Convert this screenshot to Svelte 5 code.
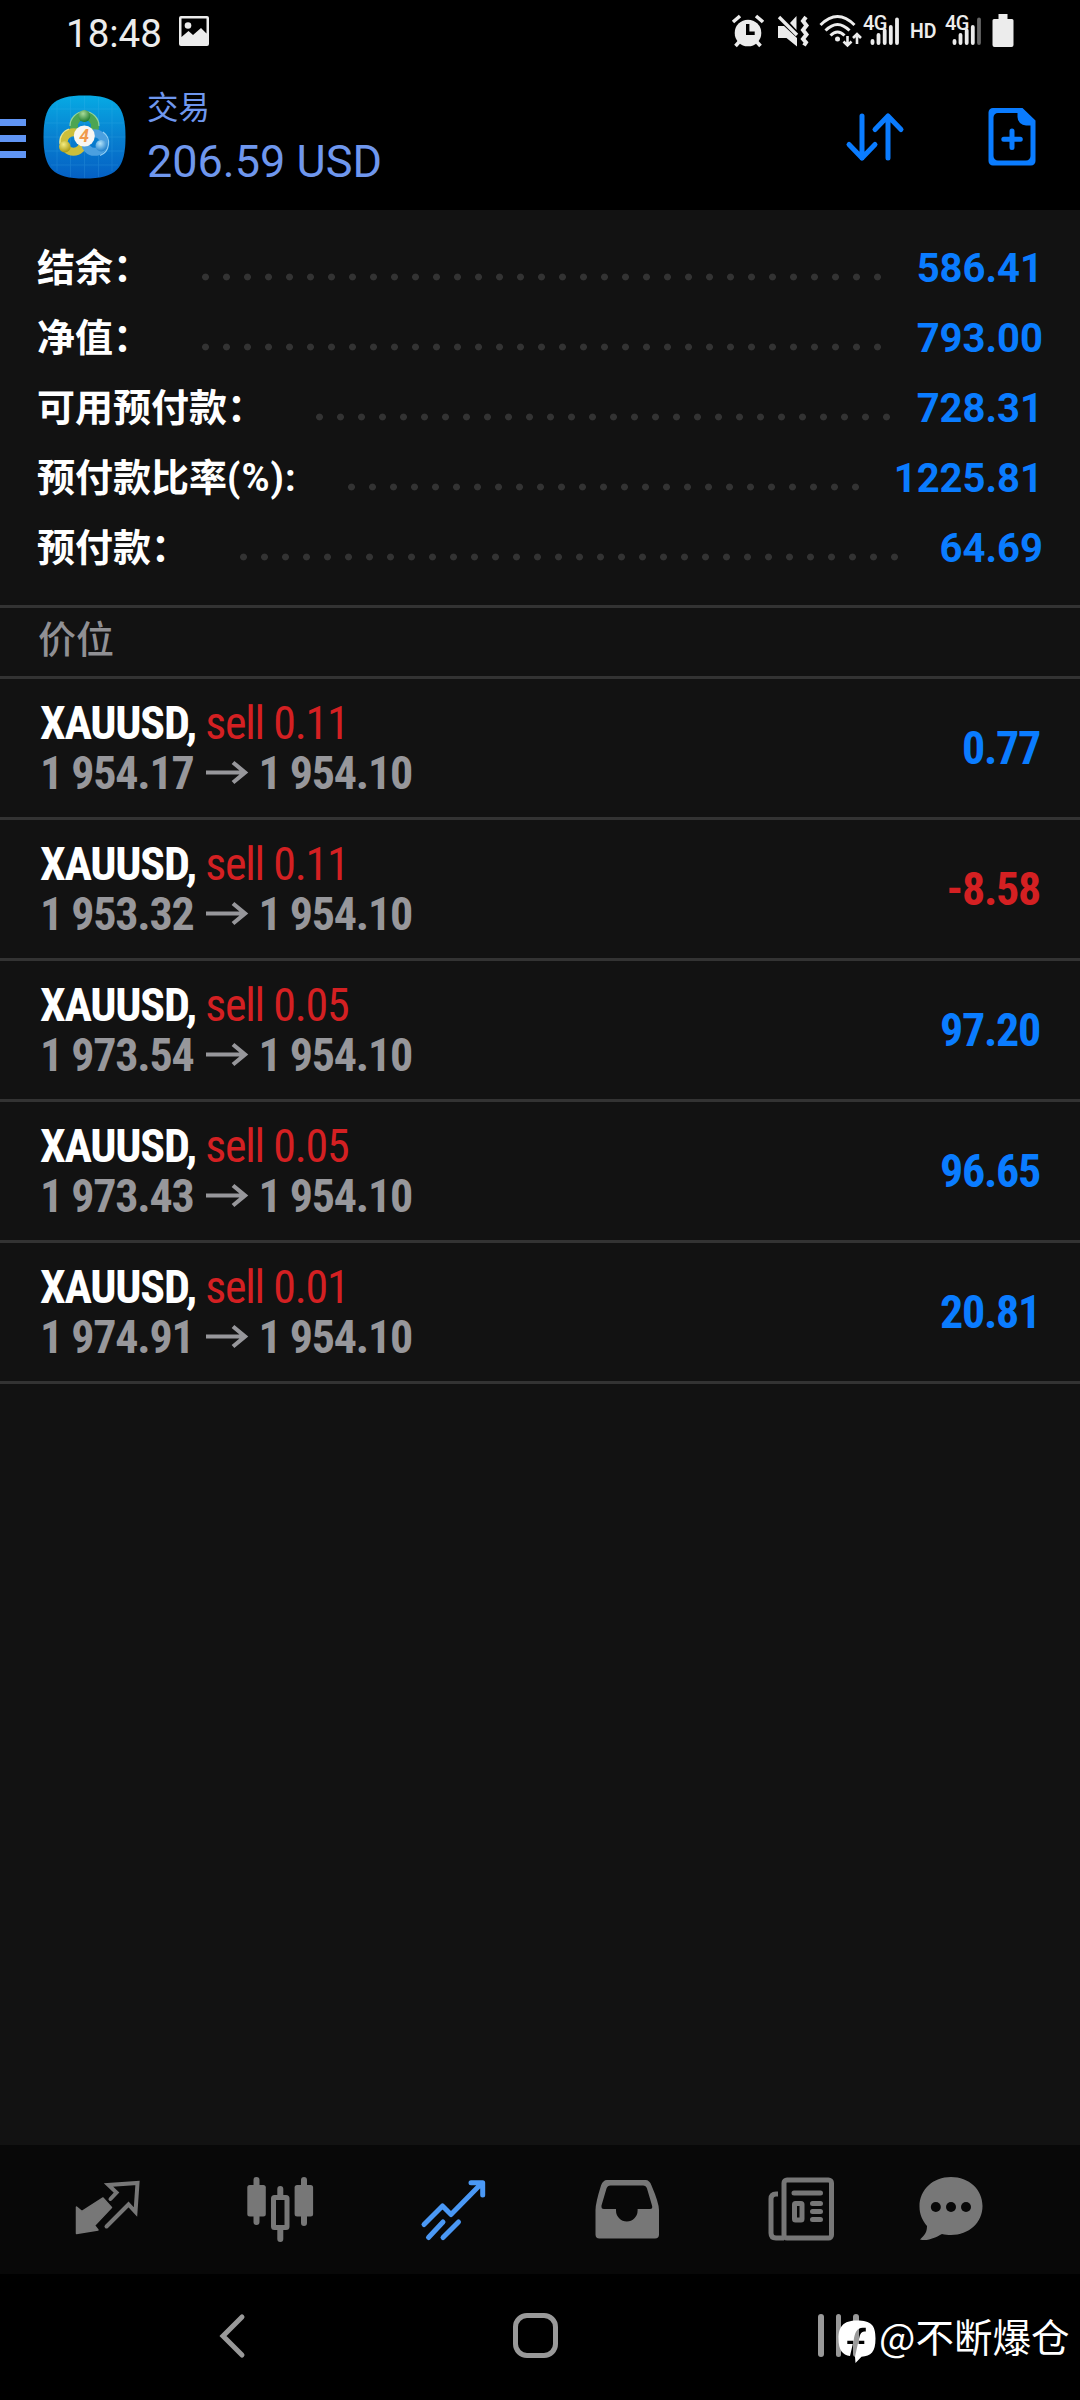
<script lang="ts">
  type Row = { label: string; unit?: string; value: string; dots: number };
  type Position = { symbol: string; side: string; volume: string; open: string; current: string; profit: string };

  const account: Row[] = [
    { label: '结余：', value: '586.41', dots: 33 },
    { label: '净值：', value: '793.00', dots: 33 },
    { label: '可用预付款：', value: '728.31', dots: 28 },
    { label: '预付款比率', unit: '(%):', value: '1225.81', dots: 25 },
    { label: '预付款：', value: '64.69', dots: 32 }
  ];

  const positions: Position[] = [
    { symbol: 'XAUUSD', side: 'sell', volume: '0.11', open: '1 954.17', current: '1 954.10', profit: '0.77' },
    { symbol: 'XAUUSD', side: 'sell', volume: '0.11', open: '1 953.32', current: '1 954.10', profit: '-8.58' },
    { symbol: 'XAUUSD', side: 'sell', volume: '0.05', open: '1 973.54', current: '1 954.10', profit: '97.20' },
    { symbol: 'XAUUSD', side: 'sell', volume: '0.05', open: '1 973.43', current: '1 954.10', profit: '96.65' },
    { symbol: 'XAUUSD', side: 'sell', volume: '0.01', open: '1 974.91', current: '1 954.10', profit: '20.81' }
  ];
</script>

<div class="screen">
  <div class="status">
    <div class="status-left">
      <span class="clock">18:48</span>
      <svg width="32" height="32" viewBox="0 0 32 32">
        <path fill="#ececec" fill-rule="evenodd" d="M3 1h26a2 2 0 0 1 2 2v26a2 2 0 0 1-2 2H3a2 2 0 0 1-2-2V3a2 2 0 0 1 2-2zM3.500 3.500v18.500l7-6 4.500 4 8-7 5.500 5.500V3.500z" />
        <circle cx="10" cy="10.500" r="3.300" fill="#ececec" />
      </svg>
    </div>
    <div class="status-right">
      <!-- alarm -->
      <svg width="34" height="34" viewBox="0 0 34 34">
        <circle cx="17" cy="19" r="13.300" fill="#ececec" />
        <path d="M2 8l7-6M32 8l-7-6M8.500 27.500l-4 4.500M25.500 27.500l4 4.500" stroke="#ececec" stroke-width="3.600" fill="none" />
        <path d="M16.700 10v9.300h7" stroke="#000" stroke-width="3.400" fill="none" />
      </svg>
      <!-- muted speaker with vibration -->
      <svg class="mute" width="34" height="34" viewBox="0 0 34 34">
        <path fill="#ececec" d="M2 12h6l13 12v8.500L10.500 24H2zM20.500 2v14L14 9z" />
        <path d="M3 3l18 18" stroke="#ececec" stroke-width="3.400" />
        <path d="M30 3l-3 4 3.500 4.500-3.500 4.500 3.500 4.500-3.500 4.500 3 3.500-2 3" stroke="#ececec" stroke-width="4" fill="none" />
      </svg>
      <!-- wifi -->
      <svg class="wifi" width="44" height="34" viewBox="0 0 44 34">
        <g stroke="#ececec" stroke-width="3" fill="none">
          <path d="M1.500 11Q18.500-6 35.500 11" />
          <path d="M6.500 16.500Q18.500 4.500 30.500 16.500" />
          <path d="M11.500 21.500Q18.500 14.500 25.500 21.500" />
          <path d="M28.500 22v9.500M24.500 27.500l4 4 4-4M38 30V20M34 24l4-4 4 4" stroke-width="2.600" />
        </g>
        <circle cx="18.500" cy="25" r="2.500" fill="#ececec" />
      </svg>
      <span class="signal">
        <span class="net">4G</span>
        <svg width="30" height="32" viewBox="0 0 30 32" stroke="#ececec" stroke-width="3.800" stroke-linecap="round">
          <path d="M2.500 28v-2M8.500 28v-8M14.700 28V15.500M20.800 28V12M27 28V4.500" />
        </svg>
      </span>
      <span class="hd">HD</span>
      <span class="signal">
        <span class="net">4G</span>
        <svg width="30" height="32" viewBox="0 0 30 32" stroke="#ececec" stroke-width="3.800" stroke-linecap="round">
          <path d="M2.500 28v-2M8.500 28v-8M14.700 28V15.500M20.800 28V12" />
          <path d="M27 28V4.500" stroke="#666" />
        </svg>
      </span>
      <svg class="battery" width="22" height="34" viewBox="0 0 22 34">
        <path fill="#ececec" d="M6.500 0h9v5H20a1.500 1.500 0 0 1 1.500 1.500V31a2 2 0 0 1-2 2h-17a2 2 0 0 1-2-2V6.500A1.500 1.500 0 0 1 2 5h4.500z" />
      </svg>
    </div>
  </div>

  <header>
    <div class="menu"><i></i><i></i><i></i></div>
    <svg class="logo" width="83" height="84" viewBox="0 0 83 84">
      <defs>
        <linearGradient id="sky" x1="0" y1="0" x2="0" y2="1">
          <stop offset="0" stop-color="#06aae4" />
          <stop offset="0.500" stop-color="#0880d0" />
          <stop offset="1" stop-color="#0460c4" />
        </linearGradient>
        <radialGradient id="green" cx="0.400" cy="0.300" r="0.700">
          <stop offset="0" stop-color="#a8dc98" /><stop offset="1" stop-color="#1f7c30" />
        </radialGradient>
        <radialGradient id="gold" cx="0.400" cy="0.300" r="0.700">
          <stop offset="0" stop-color="#f4ec80" /><stop offset="1" stop-color="#a99a14" />
        </radialGradient>
        <radialGradient id="blue" cx="0.400" cy="0.300" r="0.700">
          <stop offset="0" stop-color="#b4e4fa" /><stop offset="1" stop-color="#2080cc" />
        </radialGradient>
      </defs>
      <path fill="url(#sky)" d="M41.500 0.500C73 0.500 82.500 10 82.500 42S73 83.500 41.500 83.500 0.500 74 0.500 42 10 0.500 41.500 0.500z" />
      <path d="M14 8v68M27.500 2v80M41.500 1v82M55.500 2v80M69 8v68M8 14h67M2 28h79M1 42h81M2 56h79M8 70h67" stroke="#5cc4f4" stroke-width="0.800" opacity="0.200" />
      <g fill="none" stroke-width="8">
        <circle cx="41.500" cy="31" r="10.500" stroke="#4ca552" />
        <circle cx="30.500" cy="47" r="9.800" stroke="#ccbf3c" />
        <circle cx="51.500" cy="47.500" r="9.300" stroke="#4ba0e0" />
      </g>
      <g fill="none" stroke-width="1.200" opacity="0.850">
        <path d="M27 31a14.500 14.500 0 0 1 29 0" stroke="#a4dca0" />
        <path d="M17 49a13.500 13.500 0 0 1 9-15" stroke="#f6ee9a" />
        <path d="M60 37a13.500 13.500 0 0 1-3 23.500" stroke="#a6dcfa" />
      </g>
      <circle cx="41.300" cy="21" r="6" fill="url(#green)" />
      <circle cx="21.800" cy="51.700" r="5.800" fill="url(#gold)" />
      <circle cx="58.300" cy="50.700" r="5.800" fill="url(#blue)" />
      <circle cx="41.300" cy="41" r="10.500" fill="#f8f6f2" />
      <text x="41" y="47" text-anchor="middle" font-size="17.500" font-style="italic" font-weight="700" fill="#f09a4c">4</text>
    </svg>
    <div class="title">
      <span class="caption">交易</span>
      <span class="total">206.59 USD</span>
    </div>
    <svg class="sort" width="60" height="52" viewBox="0 0 60 52" fill="none" stroke="#0a7cff" stroke-width="5" stroke-linecap="round" stroke-linejoin="round">
      <path d="M17 5v42M4 33.500L17 47l13-13.500M43 47V5M30 18.500L43 5l13 13.500" />
    </svg>
    <svg class="new-order" width="48" height="60" viewBox="0 0 48 60">
      <path fill="#0a7cff" fill-rule="evenodd" d="M5 1h29.500L47.500 13.500V54a4.500 4.500 0 0 1-4.500 4.500H5A4.500 4.500 0 0 1 .5 54V5.500A4.500 4.500 0 0 1 5 1zM10 6a4.500 4.500 0 0 0-4.500 4.500V49A4.500 4.500 0 0 0 10 53.500h28a4.500 4.500 0 0 0 4.500-4.500V18.500h-4.500a8.500 8.500 0 0 1-8.500-8.500V6z" />
      <path d="M24 24v16.500M15.800 32.200h16.500" stroke="#0a7cff" stroke-width="5" stroke-linecap="round" />
    </svg>
  </header>

  <section class="account">
    {#each account as row}
      <div class="row">
        <span class="label">{row.label}{#if row.unit}<span class="unit">{row.unit}</span>{/if}</span>
        <span class="dots" style:width="{row.dots * 21}px"></span>
        <span class="value">{row.value}</span>
      </div>
    {/each}
  </section>

  <h2>价位</h2>

  <main>
    {#each positions as p}
      <div class="position">
        <div class="info">
          <div class="deal"><b>{p.symbol},</b> <span class="side">{p.side} {p.volume}</span></div>
          <div class="prices">
            <span>{p.open}</span>
            <svg width="44" height="26" viewBox="0 0 44 26" fill="none" stroke="#97979b" stroke-width="4.200">
              <path d="M1 12.500h39M28 2.500l12 10-12 10" />
            </svg>
            <span>{p.current}</span>
          </div>
        </div>
        <div class="profit" class:loss={p.profit.startsWith('-')}>{p.profit}</div>
      </div>
    {/each}
  </main>

  <nav class="tabs">
    <!-- quotes -->
    <svg width="70" height="70" viewBox="0 0 70 70">
      <path d="M30 24L38.500 33.500L21.500 51.500L25 56L3.500 59.500V33L9 37.500z" fill="#777" stroke="#777" stroke-width="1.500" stroke-linejoin="round" />
      <path d="M37.500 25l6-6.500-8-7.500L64.500 9 62.500 38l-7-7.500L33.500 52.500" fill="none" stroke="#777" stroke-width="4" stroke-linecap="round" />
    </svg>
    <!-- chart -->
    <svg width="70" height="70" viewBox="0 0 70 70">
      <path d="M11.500 6v42M59 6v43M35.300 15v10M35.300 54v11" stroke="#777" stroke-width="6" stroke-linecap="round" />
      <rect x="2.300" y="11" width="18.500" height="31.500" rx="2.500" fill="#777" />
      <rect x="49.600" y="11" width="18.500" height="31.500" rx="2.500" fill="#777" />
      <rect x="28.500" y="23.500" width="13.500" height="30" rx="1" fill="#080808" stroke="#777" stroke-width="5" />
    </svg>
    <!-- trade -->
    <svg width="70" height="70" viewBox="0 0 70 70" fill="none" stroke="#4a98f5" stroke-width="5" stroke-linecap="round" stroke-linejoin="round">
      <path d="M6 50.500L24.500 32l8.500 8.500L62 11M53 8.800h11.700V21M60 13l4-4M10.500 63.500l14.500-15.500M25 63.500l15.500-15.500" />
    </svg>
    <!-- history -->
    <svg width="70" height="70" viewBox="0 0 70 70">
      <path fill="#777" fill-rule="evenodd" d="M15 6h38.500q4 0 6 5.500Q67 29 67 36v24.500a4 4 0 0 1-4 4H7.500a4 4 0 0 1-4-4V36Q3.500 29 9 11.500 11 6 15 6zM18.500 11.500q-3 0-4 3L9.500 31.500Q9 35 12 35h12v1.500a10.800 11 0 0 0 21.600 0V35H58q3 0 2-3.500L55 14.500q-1-3-4-3z" />
    </svg>
    <!-- news -->
    <svg width="70" height="70" viewBox="0 0 70 70" fill="none" stroke="#777" stroke-width="5">
      <rect x="18" y="6" width="47.500" height="58" rx="3" />
      <path d="M18 64h-8q-5 0-5-5V25q0-5 5-5h2" />
      <path d="M28 19h26.500M46.500 29.500h8M46.500 37.500h8M46.500 45.500h8" stroke-linecap="round" />
      <rect x="28.500" y="29.500" width="7.500" height="16.500" rx="1" />
    </svg>
    <!-- messages -->
    <svg width="70" height="70" viewBox="0 0 70 70">
      <path fill="#777" d="M35 3C17 3 3.500 15.500 3.500 32.500c0 8 3 14 7.500 19.500 0 6-2 9-7 13.500 8 2 15.500-2 22-5.500 3 .8 6 1 9 1 18 0 31.500-12.500 31.500-29S53 3 35 3z" />
      <g fill="#080808"><circle cx="19.800" cy="33" r="5" /><circle cx="35" cy="33" r="5" /><circle cx="50" cy="33" r="5" /></g>
    </svg>
  </nav>

  <footer>
    <svg class="back" width="28" height="48" viewBox="0 0 28 48" fill="none" stroke="#999" stroke-width="5" stroke-linecap="round">
      <path d="M24 5L5 24l19 19" />
    </svg>
    <div class="home"></div>
    <div class="recents"><i></i><i></i><i></i></div>
    <div class="watermark">
      <svg width="38" height="46" viewBox="0 0 38 46">
        <path fill="#fff" d="M19 1.500C33 1.500 37.500 6 37.500 19.500S33 37 23.500 37.700L17.500 44l-.5-6.300 2.800-12.700h6.500v-3.300h-5.500c.8-5.500 2-9.200 5.500-9.200h1.500V8.800h-3c-6 0-8 5-9.200 12.900H9.300V25h5.500L12 37C4.500 36 .5 31 .5 19.500S5 1.500 19 1.500z" />
      </svg>
      <span>@不断爆仓</span>
    </div>
  </footer>
</div>

<style>
  :global(body) {
    background: #000;
  }

  .screen {
    width: 1080px;
    height: 2400px;
    display: flex;
    flex-direction: column;
    background: #121212;
    font-family: Roboto, 'Noto Sans CJK SC', sans-serif;
    overflow: hidden;
  }

  svg {
    display: block;
    flex: none;
  }

  .status {
    height: 64px;
    padding: 0 66px;
    display: flex;
    justify-content: space-between;
    background: #000;
    color: #ececec;
  }

  .status-left,
  .status-right {
    display: flex;
    align-items: center;
    height: 62px;
  }

  .status-left {
    gap: 16px;
  }

  .clock {
    padding-top: 5px;
    font-size: 38.500px;
    line-height: 57px;
  }

  .mute {
    margin-left: 11px;
  }

  .wifi {
    margin-left: 9px;
  }

  .signal {
    position: relative;
    width: 37px;
    height: 32px;
  }

  .signal svg {
    margin-left: 7px;
  }

  .net {
    position: absolute;
    left: 0;
    top: -3px;
    font-size: 20px;
    line-height: 22px;
    font-weight: 500;
    letter-spacing: -0.500px;
  }

  .hd {
    margin: 0 8px 0 10px;
    width: 27px;
    font-size: 19.500px;
    font-weight: 600;
  }

  .battery {
    margin-left: 10px;
  }

  header {
    height: 146px;
    display: flex;
    background: #000;
    color: #6f97ee;
  }

  .menu {
    width: 26px;
    padding-top: 55px;
    display: flex;
    flex-direction: column;
    gap: 9px;
  }

  .menu i {
    height: 7px;
    background: #6095f4;
  }

  .logo {
    margin: 31px 0 0 17px;
  }

  .title {
    width: 300px;
    margin: 22px 0 0 21px;
    display: flex;
    flex-direction: column;
  }

  .caption {
    font-size: 31.500px;
    line-height: 46px;
  }

  .total {
    font-size: 45px;
    line-height: 60px;
    white-space: nowrap;
  }

  .sort {
    margin: 47px 0 0 398px;
  }

  .new-order {
    margin: 43px 0 0 83px;
  }

  .account {
    padding: 23px 37px 22px;
  }

  .row {
    height: 70px;
    display: flex;
    align-items: center;
  }

  .label {
    margin-top: -7px;
    color: #fff;
    font-size: 38px;
    font-weight: 700;
    white-space: nowrap;
  }

  .unit {
    letter-spacing: 1.100px;
  }

  .dots {
    height: 8px;
    margin: 18px 0 0 44px;
    background: radial-gradient(circle at center, #333 3px, transparent 3.8px) 0 0 / 21px 8px repeat-x;
  }

  .value {
    margin-left: auto;
    color: #0a7cff;
    font-size: 40px;
    font-weight: 700;
  }

  h2 {
    height: 68px;
    margin: 0;
    padding: 0 38px;
    border-top: 3px solid #333;
    border-bottom: 3px solid #333;
    color: #909094;
    font-size: 38px;
    font-weight: 500;
    line-height: 64px;
  }

  main {
    flex: 1;
  }

  .position {
    height: 138px;
    padding: 0 40px;
    border-bottom: 3px solid #333;
    display: flex;
    align-items: center;
    justify-content: space-between;
    font-family: 'Roboto Condensed', Roboto, sans-serif;
    font-stretch: 75%;
    font-size: 46px;
    line-height: 50px;
    letter-spacing: -1.250px;
  }

  .deal b {
    color: #fff;
  }

  .side {
    color: #d42022;
  }

  .prices {
    display: flex;
    align-items: center;
    color: #97979b;
    font-weight: 700;
  }

  .prices svg {
    margin: 0 9px 0 12px;
  }

  .profit {
    color: #0a7cff;
    font-weight: 700;
  }

  .profit.loss {
    color: #d42022;
  }

  .tabs {
    height: 127px;
    padding: 0 0 2px 73px;
    display: grid;
    grid-template-columns: 171.500px 173px 174px 174px 150.500px 70px;
    align-items: center;
    background: #080808;
  }

  footer {
    position: relative;
    height: 123px;
    padding-bottom: 3px;
    display: flex;
    align-items: center;
    background: #000;
  }

  .back {
    margin-left: 218px;
  }

  .home {
    width: 35px;
    height: 35px;
    margin-left: 267px;
    border: 5.500px solid #999;
    border-radius: 14px;
  }

  .recents {
    margin-left: 260px;
    display: flex;
    gap: 12px;
  }

  .recents i {
    width: 5.500px;
    height: 43px;
    border-radius: 3px;
    background: #999;
  }

  .watermark {
    position: absolute;
    left: 838px;
    top: 33px;
    display: flex;
    align-items: flex-start;
    gap: 3px;
    color: #fff;
    font-family: 'Noto Sans CJK SC', sans-serif;
    font-size: 38.500px;
    line-height: 56px;
    white-space: nowrap;
  }

  .watermark svg {
    margin-top: 12px;
  }
</style>
